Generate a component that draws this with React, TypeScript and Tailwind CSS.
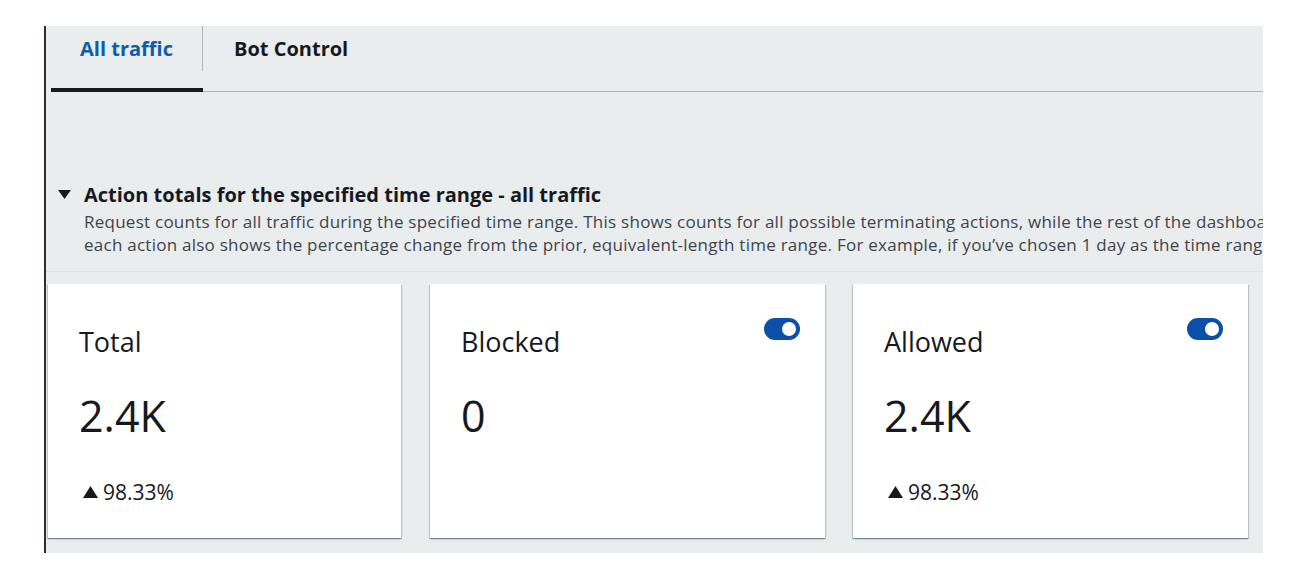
import React from "react";

type Metric = {
  label: string;
  value: string;
  change?: string;
  toggle?: boolean;
  width: string;
};

const METRICS: Metric[] = [
  { label: "Total", value: "2.4K", change: "98.33%", width: "w-[353px]" },
  { label: "Blocked", value: "0", toggle: true, width: "w-[395px]" },
  { label: "Allowed", value: "2.4K", change: "98.33%", toggle: true, width: "w-[395px]" },
];

function Toggle() {
  return (
    <span className="relative -mt-[8px] inline-flex h-[22px] w-[36px] shrink-0 rounded-full bg-[#0b4fa6]">
      <span className="absolute right-[2px] top-[2px] h-[18px] w-[18px] rounded-full border-[2px] border-[#0b4fa6] bg-white" />
    </span>
  );
}

function MetricCard({ metric }: { metric: Metric }) {
  return (
    <div
      className={`${metric.width} h-[254px] shrink-0 bg-white pl-[31px] pr-[25px] pt-[42px] shadow-[0_1px_1px_0_rgba(0,28,36,0.3),1px_1px_1px_0_rgba(0,28,36,0.15),-1px_1px_1px_0_rgba(0,28,36,0.15)]`}
    >
      <div className="flex items-start justify-between">
        <span className="text-[27px] leading-[32px] text-[#16191f]">{metric.label}</span>
        {metric.toggle && <Toggle />}
      </div>
      <div className="mt-[33px] text-[43px] leading-[50px] text-[#16191f]">{metric.value}</div>
      {metric.change && (
        <div className="mt-[37px] flex items-center gap-[5px] text-[21px] leading-[28px] text-[#16191f]">
          <svg width="15" height="12" viewBox="0 0 15 12" className="ml-[4px]">
            <polygon points="7.5,0 15,12 0,12" fill="#16191f" />
          </svg>
          <span>{metric.change}</span>
        </div>
      )}
    </div>
  );
}

export default function App() {
  return (
    <div className="min-h-screen bg-white pt-[26px] font-['Open_Sans',sans-serif]">
      <div className="ml-[44px] h-[527px] w-[1219px] overflow-hidden border-l-2 border-[#2a2e33] bg-[#eaeded]">
        {/* tabs */}
        <div className="ml-[5px] flex h-[66px] border-b border-[#aab7b8]">
          <div className="-mb-px h-[66px] w-[152px] border-b-4 border-[#16191f]">
            <div className="h-[45px] border-r border-[#aab7b8] pt-[10px] text-center text-[20px] font-bold leading-[26px] text-[#0f5cab]">
              All traffic
            </div>
          </div>
          <div className="px-[31px] pt-[10px] text-[20px] font-bold leading-[26px] text-[#16191f]">
            Bot Control
          </div>
        </div>

        {/* section header */}
        <div className="border-b border-[#dde1e1] pb-[15px] pt-[90px]">
          <div className="flex items-center pl-[12px]">
            <svg width="13" height="9" viewBox="0 0 13 9" className="shrink-0">
              <polygon points="0,0 13,0 6.5,9" fill="#16191f" />
            </svg>
            <h2 className="ml-[13px] whitespace-nowrap text-[20px] font-bold leading-[25px] text-[#16191f]">
              Action totals for the specified time range - all traffic
            </h2>
          </div>
          <div className="mt-[3px] pl-[38px] text-[17px] leading-[23px] tracking-[0.25px] text-[#3f444c]">
            <p className="whitespace-nowrap">
              Request counts for all traffic during the specified time range. This shows counts for all
              possible terminating actions, while the rest of the dashboard shows counts for the
              actions that you select.
            </p>
            <p className="whitespace-nowrap">
              each action also shows the percentage change from the prior, equivalent-length time range.
              For example, if you’ve chosen 1 day as the time range, the change is relative to the
              previous day.
            </p>
          </div>
        </div>

        {/* metric cards */}
        <div className="ml-[2px] mt-[12px] flex gap-[29px]">
          {METRICS.map((m, i) => (
            <div key={m.label} className={i === 2 ? "-ml-px" : ""}>
              <MetricCard metric={m} />
            </div>
          ))}
        </div>
      </div>
    </div>
  );
}
